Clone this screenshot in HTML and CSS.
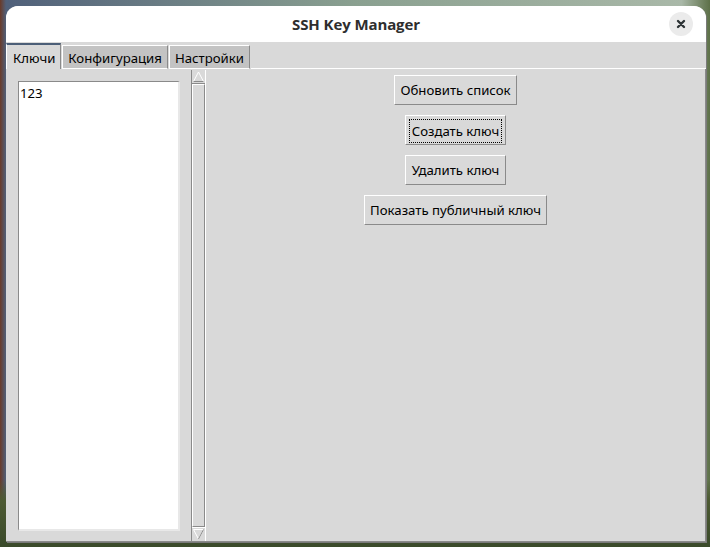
FILE: index.html
```html
<!DOCTYPE html>
<html lang="ru">
<head>
<meta charset="utf-8">
<title>SSH Key Manager</title>
<link rel="stylesheet" href="styles.css">
</head>
<body>
<div class="window">
  <header class="titlebar">
    <span></span>
    <h1 class="title">SSH Key Manager</h1>
    <button class="close" aria-label="Закрыть">
      <svg width="10" height="10" viewBox="0 0 10 10"><path d="M2 2 L8 8 M8 2 L2 8" stroke="#2e3436" stroke-width="2.4" stroke-linecap="round"/></svg>
    </button>
  </header>
  <div class="tabs">
    <div class="tab active">Ключи</div>
    <div class="tab">Конфигурация</div>
    <div class="tab">Настройки</div>
    <div class="tabfill"></div>
  </div>
  <main class="pane">
    <div class="listwrap">
      <div class="listbox"><div class="item">123</div></div>
    </div>
    <div class="scrollbar">
      <div class="arrow up"><svg width="11" height="11" viewBox="0 0 11 11"><path d="M5.5 1 L10.5 10.5 L0.5 10.5 Z" fill="#d9d9d9" stroke="#ffffff" stroke-width="1"/><path d="M10.5 10.5 L0.5 10.5" stroke="#8a8a8a" stroke-width="1"/></svg></div>
      <div class="slider"></div>
      <div class="arrow down"><svg width="11" height="11" viewBox="0 0 11 11"><path d="M0.5 0.5 L10.5 0.5 L5.5 10 Z" fill="#d9d9d9" stroke="#ffffff" stroke-width="1"/><path d="M10.5 0.5 L5.5 10" stroke="#8a8a8a" stroke-width="1"/></svg></div>
    </div>
    <div class="actions">
      <button class="btn">Обновить список</button>
      <button class="btn focus"><span class="ring">Создать ключ</span></button>
      <button class="btn">Удалить ключ</button>
      <button class="btn">Показать публичный ключ</button>
    </div>
  </main>
</div>
</body>
</html>
```

FILE: styles.css
```css
html, body {
  margin: 0;
  padding: 0;
  width: 710px;
  height: 547px;
  overflow: hidden;
}
body {
  background:
    linear-gradient(180deg, rgba(0,0,0,0) 0, rgba(0,0,0,0) 480px, #4d5a33 500px, #3a4a2a 547px),
    linear-gradient(90deg, #6a3a28 0, #50607a 6px, #8aa090 50%, #a9b8a8 96%, #5d7048 100%);
  font-family: "Noto Sans", "DejaVu Sans", sans-serif;
}
.window {
  margin: 6px 0 0 6px;
  width: 700px;
  height: 536px;
  border-radius: 12px 12px 0 0;
  overflow: hidden;
  background: #d9d9d9;
  display: flex;
  flex-direction: column;
  box-shadow: 1px 1px 0 #7a7a7a;
}
.titlebar {
  height: 36px;
  flex: none;
  background: #ffffff;
  display: grid;
  grid-template-columns: 1fr auto 1fr;
  align-items: center;
}
.title {
  margin: 0;
  font-family: "Open Sans", "Noto Sans", sans-serif;
  font-weight: 700;
  font-size: 15px;
  color: #2e2e2e;
  letter-spacing: -0.1px;
}
.close {
  justify-self: end;
  margin-right: 13px;
  width: 24px;
  height: 24px;
  border-radius: 50%;
  border: none;
  background: #ebebeb;
  display: flex;
  align-items: center;
  justify-content: center;
  padding: 0;
}
.tabs {
  height: 27px;
  flex: none;
  display: flex;
  align-items: flex-end;
  font-size: 13.2px;
  color: #000;
}
.tab {
  height: 24px;
  box-sizing: border-box;
  padding: 2px 5px 0 5px;
  background: #c3c3c3;
  border-top: 1px solid #ffffff;
  border-left: 1px solid #ffffff;
  border-right: 1px solid #8a8a8a;
  border-bottom: 1px solid #ffffff;
  margin-right: 1px;
  line-height: 20px;
}
.tab.active {
  height: 26px;
  background: #d9d9d9;
  border-top: 2px solid #4c5f78;
  border-left: 1px solid #ffffff;
  border-bottom: none;
  padding: 3px 5px 0 6px;
  margin-right: 1px;
}
.tabfill {
  flex: 1;
  border-bottom: 1px solid #ffffff;
  height: 0;
}
.pane {
  flex: 1;
  display: flex;
  border-bottom: 1px solid #8a8a8a;
  border-right: 1px solid #8a8a8a;
}
.listwrap {
  padding: 12px 11px 10px 12px;
  display: flex;
}
.listbox {
  width: 162px;
  box-sizing: border-box;
  background: #ffffff;
  border-top: 1px solid #8a8a8a;
  border-left: 1px solid #8a8a8a;
  border-right: 2px solid #e8e8e8;
  border-bottom: 2px solid #e8e8e8;
  font-size: 13.2px;
  line-height: 18px;
  padding: 2px 1px;
}
.scrollbar {
  width: 13px;
  display: flex;
  flex-direction: column;
  border-left: 1px solid #8a8a8a;
  border-right: 1px solid #ffffff;
  margin-top: 1px;
}
.arrow {
  height: 13px;
  display: flex;
  align-items: center;
  justify-content: center;
  background: #d9d9d9;
}
.arrow.up { border-bottom: 1px solid #8a8a8a; }
.arrow.down { border-top: 1px solid #ffffff; }
.slider {
  flex: 1;
  box-sizing: border-box;
  border-left: 1px solid #ffffff;
  border-right: 1px solid #8a8a8a;
  border-top: 1px solid #ffffff;
  border-bottom: 1px solid #8a8a8a;
  background: #d9d9d9;
}
.actions {
  flex: 1;
  display: flex;
  flex-direction: column;
  align-items: center;
  gap: 10px;
  padding-top: 6px;
}
.btn {
  height: 30px;
  min-width: 101px;
  box-sizing: border-box;
  padding: 0 5.5px;
  background: #d9d9d9;
  border-top: 1px solid #ffffff;
  border-left: 1px solid #ffffff;
  border-right: 1px solid #8a8a8a;
  border-bottom: 1px solid #8a8a8a;
  font-family: "Noto Sans", "DejaVu Sans", sans-serif;
  font-size: 13.2px;
  color: #000;
}
.btn.focus {
  padding: 3px;
}
.ring {
  display: flex;
  align-items: center;
  justify-content: center;
  height: 100%;
  border: 1px dotted #000;
  padding: 0 1px;
}
```
